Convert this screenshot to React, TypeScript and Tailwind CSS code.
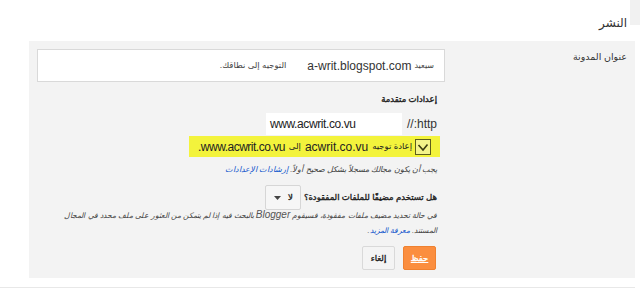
import React from "react";

const F = "font-['Liberation_Sans','DejaVu_Sans',sans-serif]";
const B = "[-webkit-text-stroke:0.35px_#222]";

function Check() {
  return (
    <svg width="16" height="16" viewBox="0 0 16 16" className="shrink-0">
      <rect x="0.5" y="0.5" width="15" height="15" fill="#f4f48a" stroke="#5e5e1c" strokeWidth="1" />
      <polyline points="3.5,6 8,11 12.5,5.5" fill="none" stroke="#3c3c10" strokeWidth="1.6" />
    </svg>
  );
}

export default function App() {
  return (
    <div dir="rtl" className={`relative w-[640px] h-[296px] bg-white text-[#222] ${F}`}>
      <div className="absolute right-0 top-0 w-[10px] h-[25px] bg-[#f1f1f1]" />
      <div className="w-[635px] mr-[5px]">
        <div className="h-[41px] pt-[14px] pr-[8px] text-[12px] leading-[18px] text-[#333]">النشر</div>
        <div className="ml-[29px] h-[237px] bg-[#f3f3f3] flex">
          <div className="w-[190px] pr-[8px] pt-[9px] text-[9.5px] leading-[14px] text-[#333]">عنوان المدونة</div>
          <div className="w-[408px] pt-[8px] flex flex-col">
            <div className="h-[33px] bg-white border border-[#d9d9d9] flex items-center pr-[10px] text-[#444]">
              <span className="text-[8px]">سيعيد</span>
              <span dir="ltr" className="text-[12px] mr-[3px] ml-[21px] text-[#333]">a-writ.blogspot.com</span>
              <span className="text-[8.5px]">التوجيه إلى نطاقك.</span>
            </div>
            <div className={`mt-[9px] pr-[8px] text-[8.5px] leading-[16px] ${B}`}>إعدادات متقدمة</div>
            <div className="mt-[6px] pr-[8px] flex items-center h-[22px]">
              <span className="text-[12px] text-[#333]">http://</span>
              <div className="mr-[5px] w-[136px] h-[22px] bg-white flex items-center pl-[4px]" dir="ltr">
                <span className="text-[12px] tracking-[-0.4px] text-[#222]">www.acwrit.co.vu</span>
              </div>
            </div>
            <div className="mt-[1px] mr-[5px] self-start h-[21px] bg-[#f3f33c] flex items-center pr-[9px] pl-[9px]">
              <Check />
              <span className="mr-[3px] text-[8.5px] text-[#222]">إعادة توجيه</span>
              <span dir="ltr" className="mr-[4px] text-[12px] text-[#222]">acwrit.co.vu</span>
              <span className="mr-[4px] text-[8.5px] text-[#222]">إلى</span>
              <span dir="ltr" className="mr-[4px] text-[12px] tracking-[-0.5px] text-[#222]">.www.acwrit.co.vu</span>
            </div>
            <div className="mt-[6px] pr-[8px] text-[8px] leading-[14px] italic text-[#444] whitespace-nowrap">
              يجب أن يكون مجالك مسجلاً بشكل صحيح أولاً. <span className="text-[#1155cc]">إرشادات الإعدادات</span>
            </div>
            <div className="mt-[8px] pr-[8px] flex items-center h-[25px]">
              <span className={`text-[8.5px] ${B}`}>هل تستخدم مضيفًا للملفات المفقودة؟</span>
              <div className="mr-[3px] w-[36px] h-[25px] bg-[#f6f6f6] border border-[#d6d6d6] rounded-[2px] flex items-center justify-between pr-[7px] pl-[8px]">
                <span className={`text-[8.5px] ${B}`}>لا</span>
                <svg width="7" height="4" viewBox="0 0 7 4"><polygon points="0,0 7,0 3.5,4" fill="#444" /></svg>
              </div>
            </div>
            <div className="mt-[-3px] pr-[8px] text-[7.6px] leading-[15px] italic text-[#444] whitespace-nowrap">
              في حالة تحديد مضيف ملفات مفقودة، فسيقوم <span dir="ltr" className="text-[10px] text-[#555]">Blogger</span> بالبحث فيه إذا لم يتمكن من العثور على ملف محدد في المجال
              <br />
              المستند. <span className="text-[#1155cc]">معرفة المزيد</span>.
            </div>
            <div className="mt-[8px] pr-[9px] flex gap-[8px]">
              <button className="w-[33px] h-[24px] rounded-[2px] bg-[#fb8e3f] border border-[#ef8130] text-white text-[8.5px] underline [-webkit-text-stroke:0.35px_#fff]">حفظ</button>
              <button className={`w-[33px] h-[24px] rounded-[2px] bg-[#f4f4f4] border border-[#d9d9d9] text-[#222] text-[8.5px] ${B}`}>إلغاء</button>
            </div>
          </div>
        </div>
        <div className="mt-[9px] h-px bg-[#e8e8e8]" />
      </div>
    </div>
  );
}
